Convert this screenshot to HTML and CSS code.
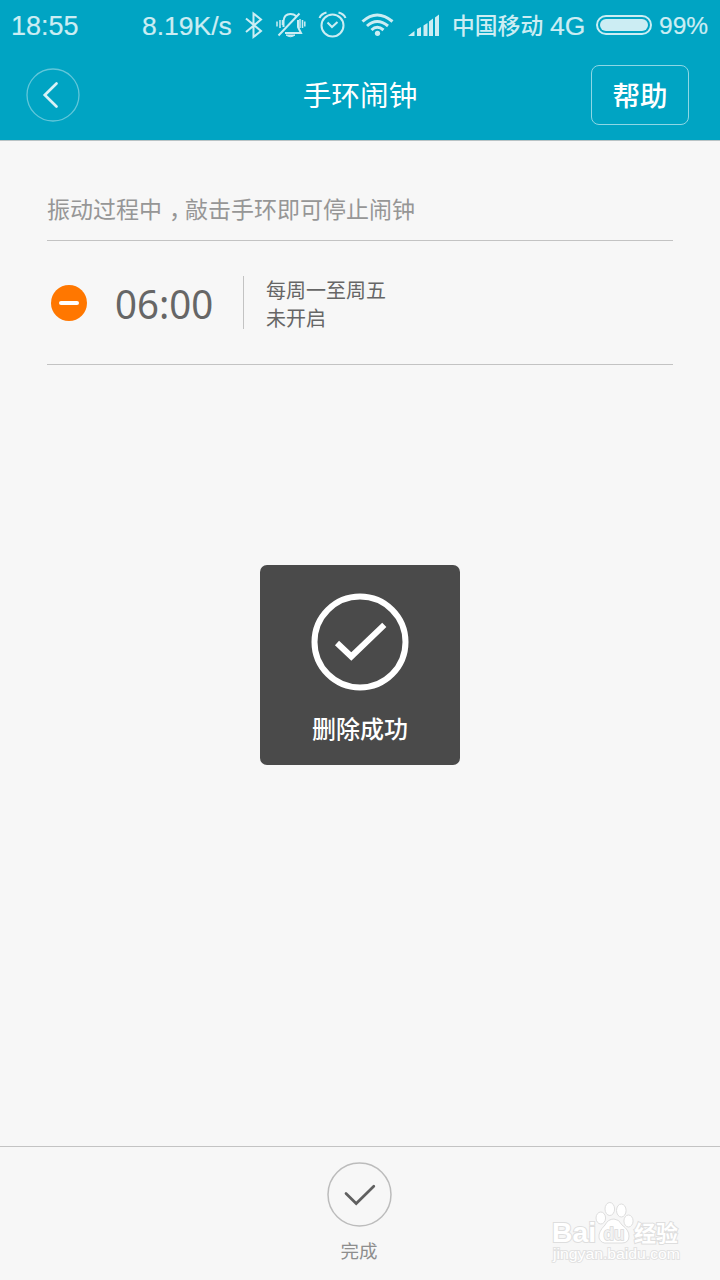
FILE: index.html
```html
<!DOCTYPE html>
<html lang="zh-CN">
<head>
<meta charset="utf-8">
<title>手环闹钟</title>
<link rel="stylesheet" href="styles.css">
</head>
<body>
<div class="screen">
  <header class="header">
    <div class="status">
      <span class="clock">18:55</span>
      <span class="speed">8.19K/s</span>
      <svg class="status-icons" width="200" height="36" viewBox="242 8 200 36" fill="none" stroke="currentColor">
        <path d="M246 18.5L261 31L253.5 37V13.500L261 19.500L246 32" stroke-width="2"/>
        <path d="M283.500 27V21Q284 14 290.500 14Q294 14 296 16M298 20V27L301 33H285M278.500 35.500L299.500 13.500" stroke-width="2"/>
        <path d="M286 35H295Q290.500 38.500 286 35Z" fill="currentColor" stroke-width="1"/>
        <path d="M277 21.500V26.500M280 20V28M282.500 20V25M300 19V28M302.500 20V28M304.800 21.500V26.500" stroke-width="1.500"/>
        <circle cx="332.500" cy="25.500" r="11" stroke-width="2"/>
        <path d="M327.500 22.500L332 27L337.500 22M319.500 18Q321 14 326.500 12.500M338.500 12.500Q344 14 345.500 18" stroke-width="2"/>
        <path d="M362.500 21.500Q377 8.500 392.500 21.500M367 26Q377 17 388 26M371.500 30Q377 24.500 383.500 30" stroke-width="3"/>
        <circle cx="377.500" cy="33.300" r="2.600" fill="currentColor" stroke="none"/>
        <path d="M408 36L414.500 31V36ZM417 36V29L421 27V36ZM423.500 36V25.500L427.500 23V36ZM429 36V21.500L433 18.500V36ZM435 36V17.500L439 14.500V36Z" fill="currentColor" stroke="none"/>
      </svg>
      <span class="carrier">中国移动</span>
      <span class="network">4G</span>
      <span class="battery"><i class="battery-level"></i></span>
      <span class="percent">99%</span>
    </div>
    <nav class="navbar">
      <span class="back">
        <svg width="54" height="54" viewBox="0 0 54 54" fill="none" stroke="#fff">
          <circle cx="27" cy="27" r="26" stroke-width="1.300" opacity=".38"/>
          <path d="M30.500 15.500L18.800 27L30.500 38.500" stroke-width="2.700" stroke-linecap="round" opacity=".85"/>
        </svg>
      </span>
      <h1 class="title">手环闹钟</h1>
      <span class="help">帮助</span>
    </nav>
  </header>

  <main class="content">
    <p class="hint">振动过程中<span class="comma">，</span>敲击手环即可停止闹钟</p>
    <section class="alarm">
      <span class="remove"></span>
      <span class="alarm-time">06:00</span>
      <div class="alarm-info">
        <div>每周一至周五</div>
        <div>未开启</div>
      </div>
    </section>
  </main>

  <footer class="footer">
    <svg width="66" height="66" viewBox="0 0 66 66" fill="none">
      <circle cx="32.500" cy="33.500" r="31.500" stroke="#bcbcbc" stroke-width="1.500"/>
      <path d="M19 32.500L29.200 42.500L46.800 25.200" stroke="#606060" stroke-width="2.700" stroke-linecap="round"/>
    </svg>
    <span class="done">完成</span>
  </footer>

  <div class="toast">
    <svg width="98" height="98" viewBox="0 0 98 98" fill="none" stroke="#fff" stroke-width="6">
      <circle cx="49" cy="49" r="45.500"/>
      <path d="M26 50L40.300 63.500L73.300 31.800"/>
    </svg>
    <span class="toast-text">删除成功</span>
  </div>

  <div class="watermark">
    <svg width="140" height="70" viewBox="545 1198 140 70" fill="#fff" stroke="#dedede">
      <ellipse cx="600.800" cy="1218" rx="4.800" ry="6"/>
      <ellipse cx="609.800" cy="1209" rx="4.800" ry="6.500"/>
      <ellipse cx="621.300" cy="1210.500" rx="4.800" ry="6.500"/>
      <ellipse cx="628.500" cy="1221" rx="4.600" ry="6"/>
      <path d="M614 1219Q608 1219 605 1225Q598 1232 599 1238Q601 1244 608 1243H622Q629 1243 629 1236Q629 1230 622 1225Q619 1219 614 1219Z"/>
      <g class="mark-text">
        <text x="552" y="1242" font-size="28" textLength="44" lengthAdjust="spacingAndGlyphs">Bai</text>
        <text class="mark-du" x="603.500" y="1240" font-size="19" textLength="21" lengthAdjust="spacingAndGlyphs">du</text>
        <text x="634" y="1241" font-size="22" textLength="44" lengthAdjust="spacingAndGlyphs">经验</text>
      </g>
      <text class="mark-url" x="553" y="1259" font-size="14" textLength="127" lengthAdjust="spacingAndGlyphs">jingyan.baidu.com</text>
    </svg>
  </div>
</div>
</body>
</html>
```

FILE: styles.css
```css
* { box-sizing: border-box; }
body {
  margin: 0;
  font-family: "Noto Sans", "Noto Sans CJK SC", sans-serif;
}
.screen {
  position: relative;
  width: 720px;
  height: 1280px;
  display: flex;
  flex-direction: column;
  background: #f7f7f7;
  overflow: hidden;
}
.header {
  height: 141px;
  background: #00a4c3;
  border-bottom: 1px solid #b9c3c5;
  color: #fff;
}
.status {
  display: flex;
  align-items: center;
  height: 50px;
  padding: 2px 0 0 11px;
  color: #ccedf3;
  font: 27px/48px "Liberation Sans", sans-serif;
  white-space: nowrap;
}
.clock, .speed, .network, .percent { -webkit-text-stroke: .2px currentColor; }
.clock { width: 131px; }
.speed { width: 100px; font-size: 26.500px; }
.status-icons { flex: none; }
.carrier {
  width: 108px;
  height: 50px;
  padding-left: 10px;
  font: 500 22.800px/48px "Noto Sans CJK SC", sans-serif;
}
.network { width: 46px; font-size: 26.500px; }
.battery {
  flex: none;
  width: 56px;
  height: 20px;
  margin-bottom: 2px;
  padding: 2px;
  border: 2px solid currentColor;
  border-radius: 10px;
}
.battery-level {
  display: block;
  height: 12px;
  border-radius: 6px;
  background: currentColor;
}
.percent { margin-left: 7px; font-size: 24.500px; }
.navbar {
  display: grid;
  grid-template-columns: 98px 1fr 98px;
  align-items: center;
  height: 90px;
  padding: 0 31px 0 26px;
}
.back { height: 54px; }
.title {
  margin: 0 0 2px 5px;
  font: 400 28.700px/50px "Noto Sans CJK SC", sans-serif;
  text-align: center;
}
.help {
  height: 60px;
  border: 1px solid #8ed7e5;
  border-radius: 8px;
  font: 500 27.500px/57px "Noto Sans CJK SC", sans-serif;
  text-align: center;
}
.content {
  flex: 1;
  padding: 39px 47px 0;
}
.hint {
  height: 61px;
  margin: 0;
  border-bottom: 1px solid #c3c3c3;
  color: #969696;
  font: 23px/57px "Noto Sans CJK SC", sans-serif;
}
.comma {
  padding: 0 4.500px 0 7px;
  font-feature-settings: "halt";
}
.alarm {
  display: flex;
  align-items: center;
  height: 124px;
  padding-left: 4px;
  border-bottom: 1px solid #c3c3c3;
  color: #666;
}
.remove {
  display: grid;
  place-items: center;
  width: 36px;
  height: 36px;
  border-radius: 50%;
  background: #ff7700;
}
.remove::before {
  content: "";
  width: 20px;
  height: 4px;
  border-radius: 2px;
  background: #fff;
}
.alarm-time {
  width: 128px;
  margin-left: 28px;
  padding-top: 2px;
  font-size: 40px;
  line-height: 60px;
  transform: scaleX(.96);
  transform-origin: left;
}
.alarm-info {
  height: 53px;
  padding-left: 22px;
  border-left: 1px solid #c3c3c3;
  font: 20px/28px "Noto Sans CJK SC", sans-serif;
}
.footer {
  display: flex;
  flex-direction: column;
  align-items: center;
  height: 134px;
  padding-top: 14px;
  border-top: 1px solid #c3c3c3;
}
.done {
  margin: 7px 2px 0 0;
  color: #8e8e8e;
  font: 18.500px/32px "Noto Sans CJK SC", sans-serif;
}
.toast {
  position: absolute;
  left: 260px;
  top: 565px;
  width: 200px;
  height: 200px;
  display: flex;
  flex-direction: column;
  align-items: center;
  padding-top: 28px;
  border-radius: 7px;
  background: #4a4a4a;
  color: #fff;
}
.toast-text {
  margin-top: 17px;
  font: 500 24px/40px "Noto Sans CJK SC", sans-serif;
}
.watermark {
  position: absolute;
  left: 545px;
  top: 1198px;
  height: 70px;
}
.mark-text {
  font-family: "Liberation Sans", "Noto Sans CJK SC", sans-serif;
  font-weight: 700;
  stroke-width: 2px;
  paint-order: stroke;
}
.mark-du {
  fill: #f2f2f2;
  stroke: #d8d8d8;
  stroke-width: 1.500px;
}
.mark-url {
  font-family: "Liberation Sans", sans-serif;
  stroke: #e2e2e2;
  stroke-width: 1.800px;
  paint-order: stroke;
}
```
